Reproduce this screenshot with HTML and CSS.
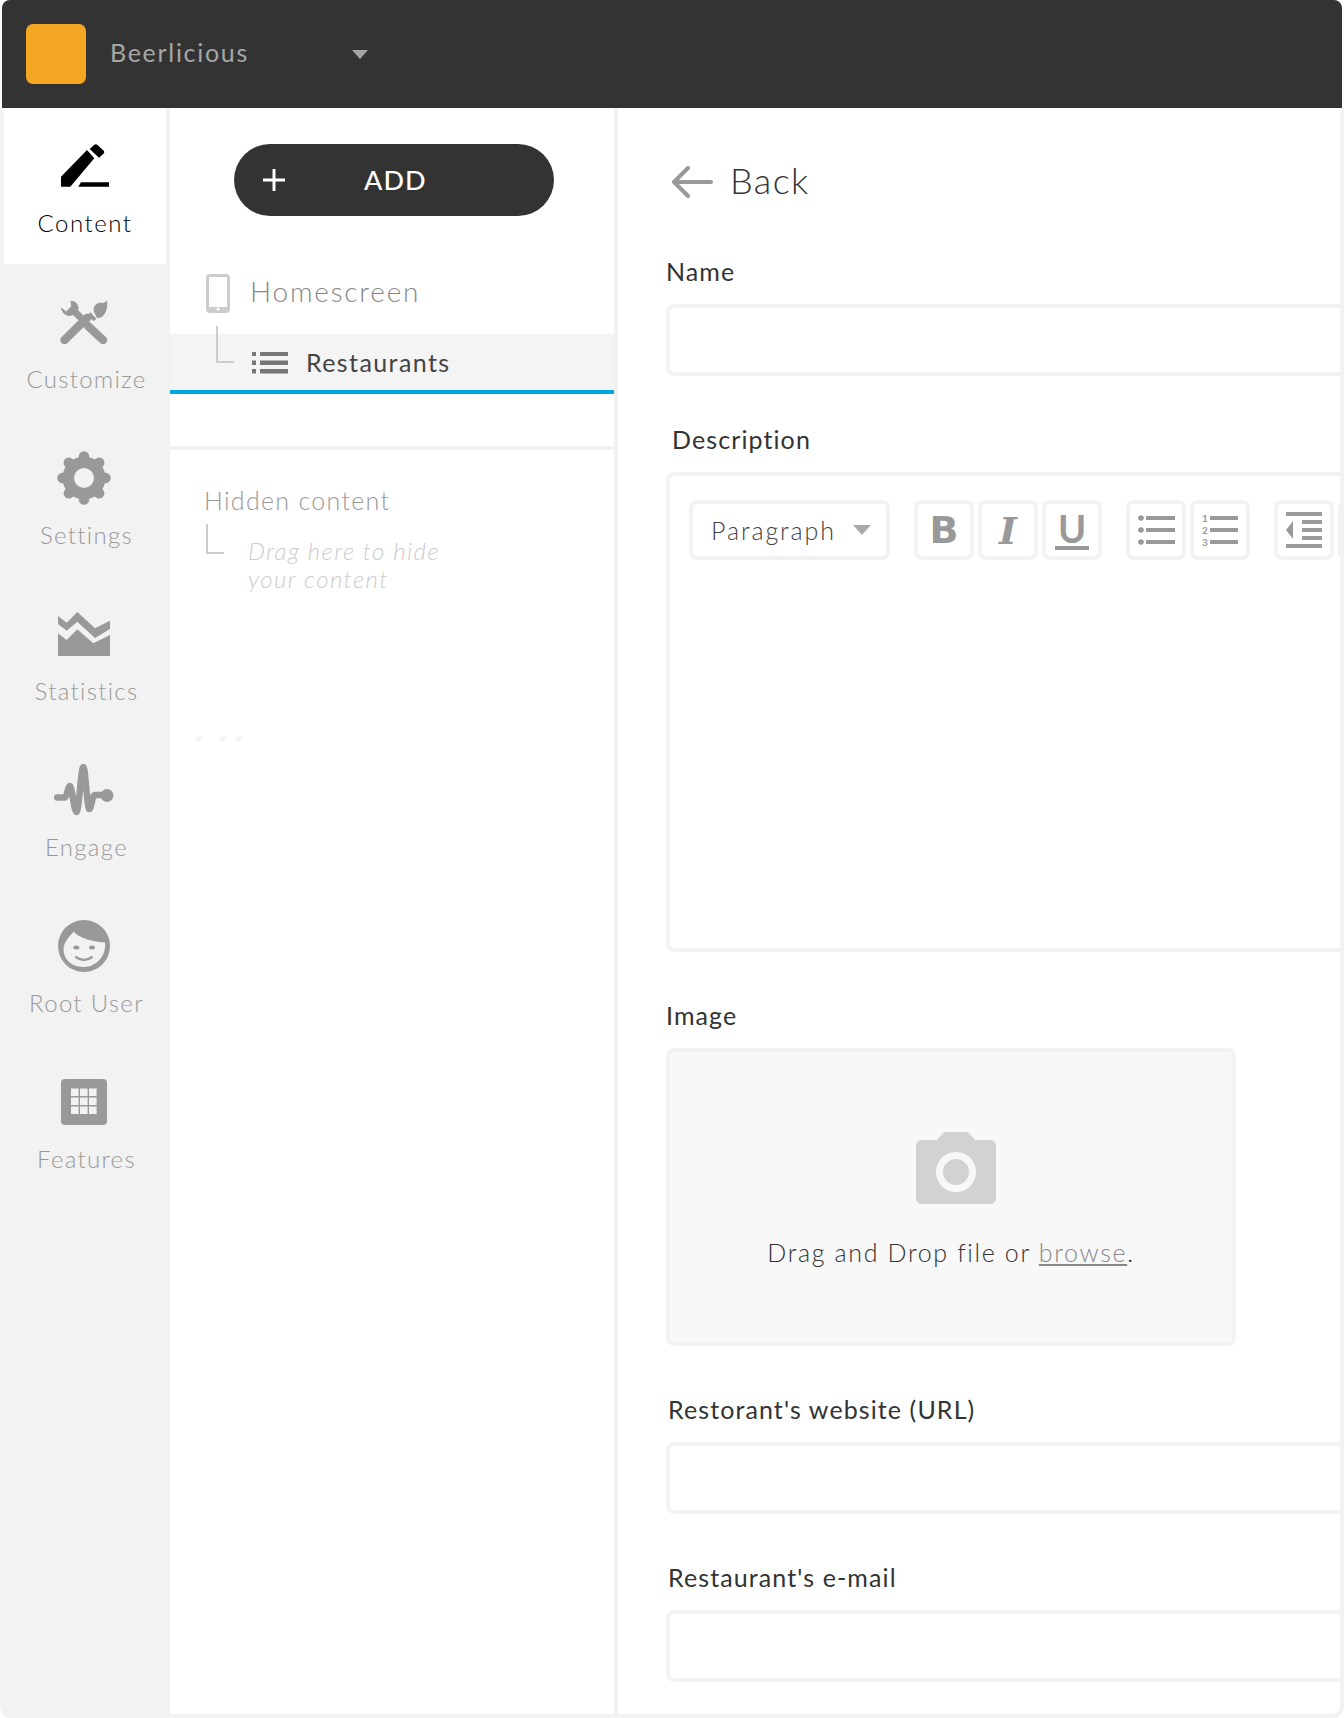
FILE: index.html
```html
<!DOCTYPE html>
<html lang="en">
<head>
<meta charset="utf-8">
<title>Beerlicious</title>
<link rel="stylesheet" href="styles.css">
</head>
<body>
<div class="app">
  <header class="topbar">
    <div class="logo"></div>
    <span class="brand">Beerlicious</span>
    <span class="caret caret-top"></span>
  </header>
  <div class="main">
    <nav class="sidebar">
      <a class="nav-item active">
        <span class="nav-icon"><svg width="48" height="44" viewBox="0 0 48 44"><path fill="#000" d="M0 42.700V32.700L26 6l7.300 8.300L9.300 42.700ZM28.700 5 33 1q2-1.500 3.500 0L42.500 6.500q1.500 1.800 0 3.200L38 13.700ZM17.300 42.700 20 38.300H48V42.700Z"/></svg></span>
        <span class="nav-label">Content</span>
      </a>
      <a class="nav-item">
        <span class="nav-icon"><svg width="48" height="46" viewBox="60 299 48 46"><g fill="none" stroke="#999" stroke-linecap="round"><path stroke-width="8.500" d="M64.500 340 87 318"/><path stroke-width="8.500" d="M103 340 88 326"/><path stroke-width="7" d="M74 311 80 317"/><path stroke-width="4" stroke-linecap="butt" d="M89 313.500 95 320"/></g><path fill="#999" d="M70.600 300.700C75 300.500 79 304 78.500 309L76 314 70 316C65 316 61 312 61 307.300L66 311.500 71 306.500ZM94 312C92 306 98 302 102 303 105 303 106 301 107 300 108.500 310 104 319 97 318Z"/></svg></span>
        <span class="nav-label">Customize</span>
      </a>
      <a class="nav-item">
        <span class="nav-icon"><svg width="54" height="54" viewBox="-27 -27 54 54"><g stroke="#999" stroke-width="10.500" stroke-linecap="round"><path d="M0-21.500V21.500M-21.500 0H21.500M-15.200-15.200 15.200 15.200M15.200-15.200-15.200 15.200"/></g><circle r="21.500" fill="#999"/><circle r="10" fill="#f2f2f2"/></svg></span>
        <span class="nav-label">Settings</span>
      </a>
      <a class="nav-item">
        <span class="nav-icon"><svg width="52" height="44" viewBox="0 0 52 44"><path fill="#999" d="M0 4 8.700 10.700 19.300 0 37 16.300 52 8.700V17L37 26 19.300 9.700 8.700 18.700 0 12ZM0 21.300 8.700 28 19.300 17.300 35.300 31.300 52 23V43Q52 44 51 44H1Q0 44 0 43Z"/></svg></span>
        <span class="nav-label">Statistics</span>
      </a>
      <a class="nav-item">
        <span class="nav-icon"><svg width="60" height="52" viewBox="54 764 60 52"><path fill="none" stroke="#999" stroke-width="6.500" stroke-linecap="round" stroke-linejoin="round" d="M57 797.500H65C67 797 68 786 70 786 72 786 74 812 76.500 812 79 812 81 767 83.300 767 85.500 767 87 809 89.300 809 91.500 809 92 795 95 795H105"/><circle cx="107" cy="795.500" r="6.500" fill="#999"/></svg></span>
        <span class="nav-label">Engage</span>
      </a>
      <a class="nav-item">
        <span class="nav-icon"><svg width="52" height="52" viewBox="0 0 52 52"><circle cx="26" cy="26" r="26" fill="#999"/><path fill="#f2f2f2" d="M5.500 29C6 22 11 17 16 11.500 20 18 36 22 47 22.500 48.500 36 38 47 26 47 14 47 5.500 40 5.500 29Z"/><ellipse cx="18.300" cy="27.400" rx="3" ry="2" fill="#999"/><ellipse cx="34" cy="27.400" rx="3" ry="2" fill="#999"/><path fill="none" stroke="#999" stroke-width="2.500" stroke-linecap="round" d="M18 37.300Q26 42.500 33.700 37.300"/></svg></span>
        <span class="nav-label">Root User</span>
      </a>
      <a class="nav-item">
        <span class="nav-icon"><svg width="46" height="46" viewBox="0 0 46 46"><rect width="46" height="46" rx="4" fill="#999"/><path fill="#f2f2f2" d="M10 9.500h7.600v7.600H10zM19 9.500h7.600v7.600H19zM28 9.500h7.600v7.600H28zM10 18.500h7.600v7.600H10zM19 18.500h7.600v7.600H19zM28 18.500h7.600v7.600H28zM10 27.500h7.600v7.600H10zM19 27.500h7.600v7.600H19zM28 27.500h7.600v7.600H28z"/></svg></span>
        <span class="nav-label">Features</span>
      </a>
    </nav>

    <aside class="tree">
      <button class="add-btn" type="button">
        <svg class="add-plus" width="22" height="22" viewBox="0 0 22 22"><path fill="none" stroke="#fff" stroke-width="3" d="M11 0V22M0 11H22"/></svg>
        <span class="add-text">ADD</span>
      </button>
      <div class="tree-root">
        <svg class="phone" width="24" height="39" viewBox="0 0 24 39"><rect x="1.500" y="1.500" width="21" height="36" rx="2.500" fill="none" stroke="#ccc" stroke-width="3"/><path fill="#ccc" d="M2 33h20v4H2z"/><circle cx="12" cy="35" r="1.500" fill="#fff"/></svg>
        <span class="tree-root-label">Homescreen</span>
      </div>
      <div class="tree-row">
        <span class="elbow"></span>
        <svg class="list-icon" width="36" height="23" viewBox="0 0 36 23"><path fill="#777" d="M0 1h4v4H0zM8 1h28v4H8zM0 9.500h4v4.500H0zM8 9.500h28v4.500H8zM0 18h4v4.500H0zM8 18h28v4.500H8z"/></svg>
        <span class="tree-row-label">Restaurants</span>
      </div>
      <div class="tree-divider"></div>
      <div class="hidden-title">Hidden content</div>
      <div class="hidden-body">
        <span class="elbow elbow-hidden"></span>
        <p class="hidden-hint">Drag here to hide<br>your content</p>
      </div>
      <div class="dots"><i></i><i></i><i></i></div>
    </aside>

    <section class="form">
      <div class="back">
        <svg class="back-arrow" width="42" height="32" viewBox="0 0 42 32"><path fill="none" stroke="#999" stroke-width="4" stroke-linecap="round" stroke-linejoin="round" d="M40 16H4M17 2 3 16 17 30"/></svg>
        <span class="back-text">Back</span>
      </div>

      <label class="field-label">Name</label>
      <div class="input"></div>

      <label class="field-label indent-7">Description</label>
      <div class="editor">
        <div class="toolbar">
          <div class="tool select"><span class="select-text">Paragraph</span><span class="caret caret-tool"></span></div>
          <div class="tool-group">
            <div class="tool tool-b">B</div>
            <div class="tool tool-i">I</div>
            <div class="tool tool-u"><span>U</span></div>
          </div>
          <div class="tool-group">
            <div class="tool"><svg width="37" height="30" viewBox="0 0 37 30"><path fill="#999" d="M8 1h29v4H8zM8 13h29v4H8zM8 25h29v4H8z"/><circle cx="3" cy="3" r="2.800" fill="#999"/><circle cx="3" cy="15" r="2.800" fill="#999"/><circle cx="3" cy="27" r="2.800" fill="#999"/></svg></div>
            <div class="tool tool-ol"><span class="ol-nums">1<br>2<br>3</span><svg width="28" height="30" viewBox="0 0 28 30"><path fill="#999" d="M0 1h28v4H0zM0 13h28v4H0zM0 25h28v4H0z"/></svg></div>
          </div>
          <div class="tool-group">
            <div class="tool"><svg width="36" height="36" viewBox="0 0 36 36"><path fill="#999" d="M0 0h36v4H0zM0 32h36v4H0zM16 8h20v4H16zM16 16h20v4H16zM16 24h20v4H16zM7 9v18L0 18Z"/></svg></div>
            <div class="tool"></div>
          </div>
        </div>
      </div>

      <label class="field-label">Image</label>
      <div class="dropzone">
        <svg class="camera" width="80" height="72" viewBox="0 0 80 72"><path fill="#d2d2d2" d="M28 0H52L59 8H74Q80 8 80 14V66Q80 72 74 72H6Q0 72 0 66V14Q0 8 6 8H21Z"/><circle cx="40" cy="40" r="20" fill="#f8f8f8"/><circle cx="40" cy="40" r="13" fill="#d2d2d2"/></svg>
        <p class="drop-text">Drag and Drop file or <a class="drop-link">browse</a>.</p>
      </div>

      <label class="field-label indent-3">Restorant's website (URL)</label>
      <div class="input"></div>

      <label class="field-label indent-3">Restaurant's e-mail</label>
      <div class="input"></div>
    </section>
  </div>
</div>
</body>
</html>
```
FILE: styles.css
```css
* { box-sizing: border-box; }
html, body { margin: 0; padding: 0; background: #fff; }
body { font-family: "Lato", "Noto Sans", sans-serif; font-weight: 300; color: #333; }
.app { width: 1344px; height: 1718px; overflow: hidden; }

.topbar { height: 108px; margin: 0 2px; background: #333; border-radius: 8px 8px 0 0; display: flex; align-items: center; padding-left: 24px; }
.logo { width: 60px; height: 60px; border-radius: 7px; background: #f5a623; }
.brand { flex: none; margin: -4px 0 0 24px; width: 242px; font-size: 25px; letter-spacing: 1.7px; color: #a6a6a6; font-weight: 400; }
.caret { flex: none; width: 0; height: 0; border-style: solid; border-color: transparent; }
.caret-top { border-width: 9px 8px 0; border-top-color: #a6a6a6; }

.main { height: 1610px; display: flex; border-right: 4px solid #f2f2f2; border-bottom: 4px solid #f2f2f2; border-radius: 0 0 12px 12px; overflow: hidden; }

.sidebar { width: 170px; flex: none; background: #f2f2f2; }
.nav-item { display: block; height: 156px; padding-top: 28px; text-align: center; color: #999; }
.nav-item.active { background: #fff; margin: 0 4px; color: #000; }
.nav-icon { display: flex; height: 60px; align-items: center; justify-content: center; padding-right: 2px; }
.active .nav-icon { padding-right: 0; }
.nav-label { display: block; margin-top: 11px; font-size: 24px; line-height: 32px; letter-spacing: 1.3px; padding-left: 3px; }
.active .nav-label { padding-left: 0; letter-spacing: 1.5px; }

.tree { width: 448px; flex: none; border-right: 4px solid #f2f2f2; padding-top: 36px; }
.add-btn { display: flex; align-items: center; width: 320px; height: 72px; margin-left: 64px; padding: 0 0 0 29px; border: 0; border-radius: 36px; background: #333; color: #fff; font-family: inherit; }
.add-text { margin: -2px 0 0 79px; font-size: 27px; font-weight: 500; letter-spacing: 1px; }
.tree-root { display: flex; align-items: center; height: 50px; margin-top: 52px; margin-bottom: 16px; padding-left: 36px; }
.tree-root-label { margin: -4px 0 0 20px; font-size: 28px; letter-spacing: 1.8px; color: #888; }
.tree-row { display: flex; align-items: center; height: 60px; padding-left: 46px; background: #f4f4f4; border-bottom: 4px solid #00a9e0; }
.elbow { width: 18px; height: 37px; border-left: 2px solid #ccc; border-bottom: 2px solid #ccc; align-self: flex-start; margin-top: -8px; flex: none; }
.list-icon { margin-left: 18px; }
.tree-row-label { margin-left: 18px; font-size: 25px; letter-spacing: 1.4px; color: #444; font-weight: 400; }
.tree-divider { height: 4px; margin-top: 52px; background: #f2f2f2; }
.hidden-title { margin: 35px 0 0 34px; font-size: 25px; line-height: 30px; letter-spacing: 1.3px; color: #999; }
.hidden-body { display: flex; padding-left: 36px; }
.elbow-hidden { height: 30px; margin-top: 9px; }
.hidden-hint { margin: 22px 0 0 24px; font-size: 24px; line-height: 28px; font-style: italic; letter-spacing: 1.4px; color: #ccc; }
.dots { display: flex; margin: 143px 0 0 26px; }
.dots i { width: 6px; height: 6px; border-radius: 50%; background: #f5f5f5; margin-right: 18px; }
.dots i:nth-child(2) { margin-right: 10px; }

.form { flex: 1; min-width: 0; padding-left: 48px; overflow: hidden; }
.back { display: flex; align-items: center; height: 40px; margin-top: 52px; margin-left: 5px; }
.back-arrow { margin-top: 4px; }
.back-text { margin-left: 17px; font-size: 36px; letter-spacing: 1.4px; color: #333; }
.field-label { display: block; height: 30px; margin-top: 48px; margin-bottom: 18px; font-size: 25px; line-height: 30px; letter-spacing: 1.1px; color: #333; font-weight: 400; }
.back + .field-label { margin-top: 56px; }
.indent-7 { padding-left: 6px; }
.indent-3 { padding-left: 2px; }
.input { width: 700px; height: 72px; border: 4px solid #f2f2f2; border-radius: 8px; }

.editor { width: 700px; height: 480px; border: 4px solid #f2f2f2; border-radius: 8px; padding: 24px 0 0 20px; overflow: hidden; }
.toolbar { display: flex; gap: 24px; margin-left: -1px; }
.tool-group { display: flex; gap: 4px; flex: none; }
.tool { flex: none; width: 60px; height: 60px; border: 4px solid #f2f2f2; border-radius: 8px; display: flex; align-items: center; justify-content: center; color: #999; }
.select { width: 201px; justify-content: flex-start; padding-left: 18px; font-size: 25px; letter-spacing: 1.9px; color: #444; }
.select-text { width: 142px; flex: none; }
.caret-tool { border-width: 10px 9px 0; border-top-color: #aaa; }
.tool-b { font-family: "DejaVu Sans", sans-serif; font-weight: 700; font-size: 38px; }
.tool-i { font-family: "DejaVu Serif", serif; font-weight: 700; font-style: italic; font-size: 38px; }
.tool-u { font-weight: 700; font-size: 38px; }
.tool-u span { border-bottom: 4px solid #999; line-height: 36px; padding: 0 3px; }
.tool-ol { gap: 2px; }
.ol-nums { font-size: 10px; line-height: 12px; font-weight: 700; text-align: center; }

.dropzone { width: 570px; height: 298px; border: 4px solid #f2f2f2; border-radius: 8px; background: #f8f8f8; display: flex; flex-direction: column; align-items: center; padding-top: 80px; }
.camera { margin-left: 10px; }
.drop-text { margin: 32px 0 0 0; font-size: 25px; letter-spacing: 1.65px; line-height: 32px; color: #333; }
.drop-link { color: #888; text-decoration: underline; }
```
